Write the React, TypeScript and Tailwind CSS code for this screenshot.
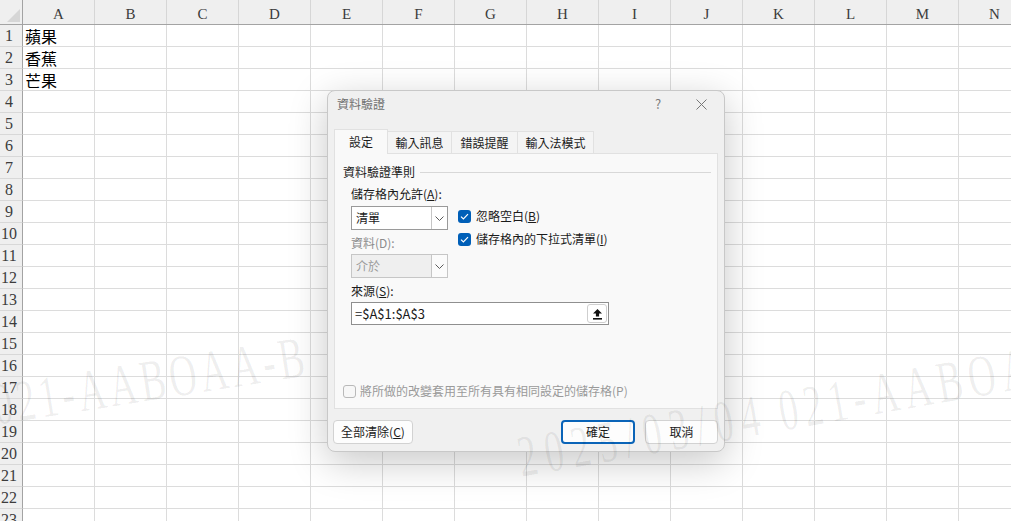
import React from 'react';

const COLS = ['A', 'B', 'C', 'D', 'E', 'F', 'G', 'H', 'I', 'J', 'K', 'L', 'M', 'N'];
const ROWS = Array.from({ length: 23 }, (_, i) => i + 1);
const CELLS: Record<number, string> = { 1: '蘋果', 2: '香蕉', 3: '芒果' };

const TABS = [
  { label: '輸入訊息', w: 'w-[64px]' },
  { label: '錯誤提醒', w: 'w-[66px]' },
  { label: '輸入法模式', w: 'w-[76px]' },
];

const Chevron = () => (
  <svg width="9" height="5" viewBox="0 0 9 5" fill="none">
    <path d="M0.5 0.5L4.5 4.5L8.5 0.5" stroke="#5a5a5a" strokeWidth="1" />
  </svg>
);

const Checked = () => (
  <span className="flex h-[13px] w-[13px] shrink-0 items-center justify-center rounded-[3px] bg-[#005fb8]">
    <svg width="9" height="7" viewBox="0 0 9 7" fill="none">
      <path d="M1 3.6L3.4 6L8 1.2" stroke="#fff" strokeWidth="1.2" />
    </svg>
  </span>
);

const Select = ({ value, disabled }: { value: string; disabled?: boolean }) => (
  <div
    className={
      disabled
        ? 'flex h-[24px] border border-[#c6c6c6] bg-[#efefef]'
        : 'flex h-[24px] border border-[#9a9a9a] bg-white'
    }
  >
    <span className={disabled ? 'flex flex-1 items-center px-[4px] text-[#9b9b9b]' : 'flex flex-1 items-center px-[4px]'}>
      {value}
    </span>
    <span
      className={
        disabled
          ? 'flex w-[16px] items-center justify-center border-l border-[#c6c6c6] bg-[#fbfbfb]'
          : 'flex w-[16px] items-center justify-center border-l border-[#c6c6c6]'
      }
    >
      <Chevron />
    </span>
  </div>
);

const Sheet = () => (
  <div className="flex flex-col font-['Liberation_Serif',serif] text-[#3c3c3c]">
    <div className="flex h-[25px] shrink-0 border-b border-[#a3a3a3] bg-[#efefef]">
      <div className="relative w-[23px] shrink-0 border-r border-[#a3a3a3]">
        <svg className="absolute bottom-[2px] right-[2px]" width="13" height="13" viewBox="0 0 13 13">
          <path d="M13 0V13H0Z" fill="#d6d6d6" />
        </svg>
      </div>
      {COLS.map((c) => (
        <div
          key={c}
          className="flex w-[72px] shrink-0 items-center justify-center border-r border-[#d6d6d6] pt-[4px] text-[15px]"
        >
          {c}
        </div>
      ))}
    </div>
    {ROWS.map((r) => (
      <div key={r} className="flex h-[22px] shrink-0">
        <div className="flex w-[23px] shrink-0 items-center justify-center border-b border-r border-b-[#d8d8d8] border-r-[#a3a3a3] bg-[#efefef] pr-[4px] text-[16px] leading-none">
          {r}
        </div>
        {COLS.map((c) => (
          <div
            key={c}
            className="flex w-[72px] shrink-0 items-center border-b border-r border-[#dcdcdc] pl-[2px] font-['Noto_Sans_CJK_TC',sans-serif] text-[16px] text-black"
          >
            {c === 'A' ? CELLS[r] : null}
          </div>
        ))}
      </div>
    ))}
  </div>
);

const Dialog = () => (
  <div className="absolute left-[327px] top-[90px] flex h-[362px] w-[398px] flex-col rounded-[8px] border border-[#c8c8c8] bg-[#f0f0f0] font-['Noto_Sans_CJK_TC',sans-serif] text-[12px] text-[#1b1b1b] shadow-[0_10px_38px_rgba(0,0,0,0.22)]">
    <div className="flex h-[26px] shrink-0 items-center pl-[9px]">
      <span className="text-[#707070]">資料驗證</span>
      <span className="ml-auto w-[40px] text-center text-[13px] text-[#7a7a7a]">?</span>
      <span className="flex w-[46px] justify-center">
        <svg width="11" height="11" viewBox="0 0 11 11" fill="none">
          <path d="M0.5 0.5L10.5 10.5M10.5 0.5L0.5 10.5" stroke="#777" strokeWidth="1" />
        </svg>
      </span>
    </div>

    <div className="mt-[12px] flex h-[24px] shrink-0 items-end px-[6px]">
      <div className="relative z-10 -mb-px flex h-[25px] w-[54px] items-center justify-center border border-b-0 border-[#e1e1e1] bg-[#f9f9f9]">
        設定
      </div>
      {TABS.map((t) => (
        <div
          key={t.label}
          className={`flex h-[22px] ${t.w} items-center justify-center border border-l-0 border-b-0 border-[#e1e1e1] bg-[#f4f4f4]`}
        >
          {t.label}
        </div>
      ))}
    </div>

    <div className="mx-[6px] flex h-[256px] shrink-0 flex-col border border-[#e1e1e1] bg-[#f9f9f9] pl-[8px] pt-[10px]">
      <div className="flex h-[16px] items-center">
        <span>資料驗證準則</span>
        <span className="ml-[5px] mr-[6px] h-px flex-1 bg-[#d8d8d8]" />
      </div>

      <div className="flex flex-col pl-[8px]">
        <div className="mt-[6px] flex h-[16px] items-center">
          儲存格內允許(<span className="underline">A</span>):
        </div>
        <div className="mt-[4px] flex">
          <div className="flex w-[97px] flex-col">
            <Select value="清單" />
            <div className="mt-[5px] flex h-[16px] items-center text-[#8c8c8c]">資料(D):</div>
            <div className="mt-[3px]">
              <Select value="介於" disabled />
            </div>
          </div>
          <div className="ml-[10px] flex flex-col gap-[7px] pt-[2px]">
            <div className="flex h-[16px] items-center gap-[5px]">
              <Checked />
              <span>
                忽略空白(<span className="underline">B</span>)
              </span>
            </div>
            <div className="flex h-[16px] items-center gap-[5px]">
              <Checked />
              <span>
                儲存格內的下拉式清單(<span className="underline">I</span>)
              </span>
            </div>
          </div>
        </div>
        <div className="mt-[5px] flex h-[16px] items-center">
          來源(<span className="underline">S</span>):
        </div>
        <div className="mt-[3px] flex h-[23px] w-[258px] items-center border border-[#8f8f8f] bg-white pl-[3px]">
          <span className="text-[13px]">=$A$1:$A$3</span>
          <span className="ml-auto mr-[1px] flex h-[19px] w-[20px] items-center justify-center rounded-[3px] border border-[#cfcfcf] bg-white">
            <svg width="11" height="12" viewBox="0 0 11 12">
              <path d="M5.5 1L10 5.6H7.1V8.6H3.9V5.6H1Z" fill="#111" />
              <rect x="1" y="10" width="9" height="1.6" fill="#111" />
            </svg>
          </span>
        </div>
      </div>

      <div className="mb-[9px] mt-auto flex h-[16px] items-center gap-[4px]">
        <span className="h-[13px] w-[13px] rounded-[3px] border border-[#b9b9b9] bg-[#f7f7f7]" />
        <span className="text-[#9a9a9a]">將所做的改變套用至所有具有相同設定的儲存格(P)</span>
      </div>
    </div>

    <div className="mt-[11px] flex h-[24px] shrink-0 pl-[5px] pr-[6px]">
      <div className="flex w-[80px] items-center justify-center rounded-[4px] border border-[#d2d2d2] bg-[#fdfdfd]">
        全部清除(<span className="underline">C</span>)
      </div>
      <div className="ml-auto flex w-[74px] items-center justify-center rounded-[4px] border-2 border-[#0a64b8] bg-[#fdfdfd]">
        確定
      </div>
      <div className="ml-[10px] flex w-[73px] items-center justify-center rounded-[4px] border border-[#d2d2d2] bg-[#fdfdfd]">
        取消
      </div>
    </div>
  </div>
);

const Watermark = () => (
  <>
    <div className="pointer-events-none absolute left-[-2px] top-[396px] h-[38px] origin-bottom-left rotate-[-9deg] scale-y-[1.55] whitespace-nowrap font-['Liberation_Serif',serif] text-[38px] leading-none tracking-[4px] text-black/[0.065]">
      021-AABOAA-B
    </div>
    <div className="pointer-events-none absolute left-[523px] top-[448px] h-[38px] origin-bottom-left rotate-[-10deg] scale-y-[1.55] whitespace-nowrap font-['Liberation_Serif',serif] text-[38px] leading-none text-black/[0.065]">
      <span className="tracking-[8px]">2025/03/04</span>
      <span className="ml-[12px] tracking-[6px]">021-AABOAA-B</span>
    </div>
  </>
);

export default function App() {
  return (
    <div className="relative h-[521px] w-[1011px] overflow-hidden bg-white">
      <Sheet />
      <Dialog />
      <Watermark />
    </div>
  );
}
